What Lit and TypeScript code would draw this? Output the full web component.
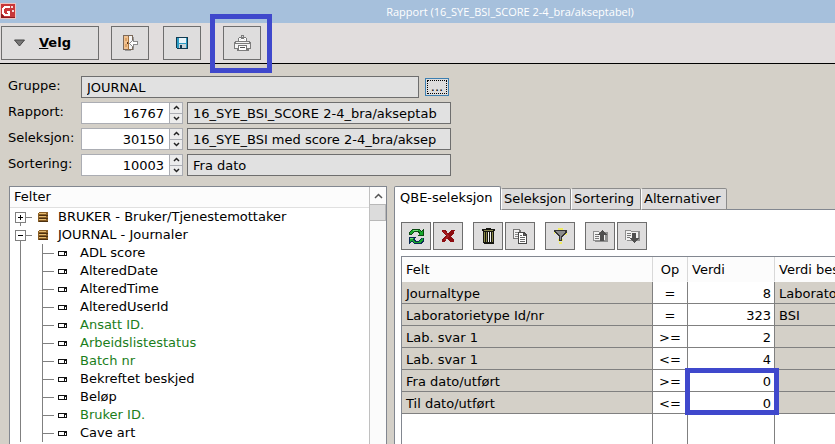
import { LitElement, html, svg, css, nothing } from "lit";
import { customElement, property } from "lit/decorators.js";
import { classMap } from "lit/directives/class-map.js";

const icons: Record<string, unknown> = {
  brand: svg`<rect width="16" height="16" fill="#eec4c0"/><rect x="1" y="1" width="14" height="14" fill="#c8383a"/><path d="M1 15V11L5 14H15V15Z" fill="#8e1c20"/><path d="M10 4H5L3 6v4l2 2h4V8.500H6.500" fill="none" stroke="#fff" stroke-width="2"/><path d="M11 3h2v2h-2zM12 7h2v2h-2z" fill="#f6d8d6"/>`,
  door: svg`<path d="M3 2h9v13h-3v1H3z" fill="#9a9a9a"/><path d="M1 0h10v15H1z" fill="#7c6a5a"/><path d="M2 1h4v13H2z" fill="#f2c290"/><path d="M6 2h1v13H6z" fill="#a8743c"/><path d="M7 1h3v13H7z" fill="#f4f4f4"/><path d="M3 3h2v3H3zM3 9h2v3H3z" fill="#dca468"/><path d="M5 7h1v2H5z" fill="#5a3418"/><path d="M7 8l4-4h1v2h4v4h-4v3h-1z" fill="#8a8a8a"/><path d="M8 8l3-3v2h4v2h-4v3z" fill="#fff"/>`,
  save: svg`<path d="M2 2h12v12H3l-1-1z" fill="#123a50"/><path d="M3 3h2v10H3zM12 3h1v10h-1zM5 8h7v1H5z" fill="#2b9cc4"/><path d="M5 3h7v5H5z" fill="#e8f4fa"/><path d="M5 9h7v4H5z" fill="#c8d4da"/><path d="M6 10h2v3H6z" fill="#123a50"/>`,
  print: svg`<path d="M4 7V3h1V2h2V0h3v2h2v1h1v4z" fill="#7c7c7c"/><path d="M5 6V3h2v1h3V3h2v3z" fill="#fff"/><path d="M8 1h1v1H8zM6 4h1v1H6zM10 4h1v1h-1z" fill="#ddd"/><path d="M1 6h15v1h1v7h-2v2H3v-2H0V7h1z" fill="#7c7c7c"/><path d="M2 7h13v1H2zM1 9h15v4H1z" fill="#f4f4f4"/><path d="M4 10h9v1H4zM4 11h1v4H4zM12 11h1v4h-1z" fill="#777"/><path d="M5 11h7v4H5z" fill="#fff"/><path d="M6 12h5v1H6z" fill="#555"/>`,
  refresh: svg`<path d="M1 7V4l3-3h7l2 2 3-2v7H9l2-2-2-2H6L4 7z" fill="#0b4b12"/><path d="M2 6V4l3-2h6l2 2 2-1v4h-4l1-2-2-2H6L4 6z" fill="#18a82c"/><path d="M16 10v3l-3 3H6l-2-2-3 2V9h7l-2 2 2 2h3l2-3z" fill="#0a2a54"/><path d="M15 10v2l-3 3H6l-2-2-2 1v-4h4l-1 2 2 2h4l2-3z" fill="#18a82c"/><path d="M5 2h5v1H5zM2 10h3v1H2z" fill="#70df74"/>`,
  cross: svg`<path d="M2 2h4l2 4 3-4h4l-1 3-3 3 3 4v2h-4l-3-4-2 4H2v-3l4-3-4-4z" fill="#8c0c10"/><path d="M3 3h2l4 5-4 4H4l3-4z" fill="#a81c20"/>`,
  trash: svg`<path d="M6 0h5v1h4v2h-1v12l-1 1H4l-1-1V3H2V1h4z" fill="#161610"/><path d="M4 4h1v10H4zM6 4h1v10H6zM12 4h1v10h-1z" fill="#8c8a48"/><path d="M8 4h1v10H8zM10 4h1v10h-1z" fill="#f4f4f4"/><path d="M4 2h9v1H4z" fill="#85844c"/>`,
  copy: svg`<path d="M1 1h6l2 2v8H1z" fill="#777"/><path d="M2 2h5v2h1v6H2z" fill="#f4f4f4"/><path d="M3 4h4v1H3zM3 6h4v1H3zM3 8h4v1H3z" fill="#888"/><path d="M6 4h6l3 3v9H6z" fill="#484848"/><path d="M7 5h4v3h3v7H7z" fill="#fff"/><path d="M12 6h1v1h-1zM8 7h2v1H8zM8 9h5v1H8zM8 11h5v1H8zM8 13h5v1H8z" fill="#666"/>`,
  filter: svg`<path d="M6 0h5v2H6zM6 11h5v2H6zM7 14h3v2H7zM2 3h1v3H2zM13 5h2v2h-2z" fill="#f0ec60"/><path d="M2 2h13v2l-5 5v4H7V9L2 4z" fill="#333"/><path d="M4 3h9v1l-4 4v4H8V8L4 4z" fill="#8c8c8c"/>`,
  load: svg`<path d="M1 3h5l1 1h9v10H3v-1H1z" fill="#8f8f8f"/><path d="M2 4h4l1 1h6v7H2z" fill="#f2f2f2"/><path d="M3 6h4v1H3zM3 8h4v1H3zM3 10h4v1H3z" fill="#777"/><path d="M10 2l5 5h-3v6H8V7H5z" fill="#505050"/>`,
  store: svg`<path d="M1 2h5l1 1h9v10H3v-1H1z" fill="#8f8f8f"/><path d="M2 3h4l1 1h7v8H2z" fill="#f2f2f2"/><path d="M3 5h4v1H3zM3 7h4v1H3zM3 9h3v1H3z" fill="#777"/><path d="M8 5h4v5h3l-5 5-5-5h3z" fill="#505050"/>`,
  table: svg`<path d="M4 3h8l1 1v9H3V4z" fill="#8a5e24"/><path d="M4 4h7v1H4zM4 7h7v1H4zM4 10h7v1H4z" fill="#e6bc72"/><path d="M4 6h9v1H4zM4 9h9v1H4zM4 12h9v1H4z" fill="#4c3010"/>`,
  field: svg`<path d="M3 6h9v5H3z" fill="#111"/><path d="M4 7h5v3H4zM10 8h1v2h-1z" fill="#fff"/>`,
};

@customElement("pixel-icon")
export class PixelIcon extends LitElement {
  @property() name = "";
  static styles = css`
    :host { display: block; width: 17px; height: 17px; flex: none; }
    svg { display: block; }
  `;
  render() {
    return html`<svg width="17" height="17" viewBox="0 0 17 17" shape-rendering="crispEdges" aria-hidden="true">${icons[this.name]}</svg>`;
  }
}

const parameters = [
  { id: "rapport", label: "Rapport:", nr: "16767", text: "16_SYE_BSI_SCORE 2-4_bra/akseptab" },
  { id: "seleksjon", label: "Seleksjon:", nr: "30150", text: "16_SYE_BSI med score 2-4_bra/aksep" },
  { id: "sortering", label: "Sortering:", nr: "10003", text: "Fra dato" },
];

const fields: { name: string; link?: boolean }[] = [
  { name: "ADL score" },
  { name: "AlteredDate" },
  { name: "AlteredTime" },
  { name: "AlteredUserId" },
  { name: "Ansatt ID.", link: true },
  { name: "Arbeidslistestatus", link: true },
  { name: "Batch nr", link: true },
  { name: "Bekreftet beskjed" },
  { name: "Beløp" },
  { name: "Bruker ID.", link: true },
  { name: "Cave art" },
];

const criteria = [
  ["Journaltype", "=", "8", "Laborato"],
  ["Laboratorietype Id/nr", "=", "323", "BSI"],
  ["Lab. svar 1", ">=", "2", ""],
  ["Lab. svar 1", "<=", "4", ""],
  ["Fra dato/utført", ">=", "0", ""],
  ["Til dato/utført", "<=", "0", ""],
];

const tools = [
  [["refresh", "Oppdater"], ["cross", "Avbryt"]],
  [["trash", "Slett"], ["copy", "Kopier"]],
  [["filter", "Filter"]],
  [["load", "Hent"], ["store", "Lagre"]],
];

@customElement("app-root")
export class AppRoot extends LitElement {
  static styles = css`
    * { box-sizing: border-box; }
    :host {
      display: flex;
      flex-direction: column;
      height: 100vh;
      overflow: hidden;
      background: #d4d0c8;
      color: #000;
      font: 13px/18px Verdana, "DejaVu Sans", sans-serif;
    }
    button, input { font: inherit; color: inherit; border-radius: 0; margin: 0; }
    button { display: flex; align-items: center; justify-content: center; padding: 0; background: #dedddd; border: 1px solid #6e6e6e; }
    ul { list-style: none; margin: 0; padding: 0; }

    .titlebar { display: flex; align-items: center; flex: none; height: 23px; background: #a6c0dc; }
    .title { flex: 1; margin: 0; padding-left: 168px; text-align: center; font: 11px/20px "Segoe UI", "Open Sans", sans-serif; color: #fff; white-space: nowrap; }

    .toolbar { display: flex; align-items: center; flex: none; gap: 12px; height: 41px; padding: 0 1px; background: #e1dddd; border-bottom: 1px solid #000; }
    .toolbar button { width: 38px; height: 34px; }
    .toolbar .choose { justify-content: flex-start; width: 98px; gap: 14px; padding-left: 12px; font-weight: bold; }
    .save { margin-left: 2px; }
    .print { position: relative; margin-left: 10px; }
    .mark { position: absolute; border: 5px solid #3f48cc; pointer-events: none; z-index: 1; }
    .print .mark { inset: -13px -12px -14px -14px; }

    .form { display: flex; flex-direction: column; flex: none; gap: 4px; padding: 12px 8px 10px; }
    .line { display: flex; height: 22px; }
    .line label { width: 73px; flex: none; line-height: 20px; white-space: nowrap; }
    .line input { height: 22px; padding: 0 5px; background: #e1e1e1; border: 1px solid #6e6e6e; outline: none; }
    .group { width: 338px; }
    .browse { width: 24px; height: 18px; margin: 2px 0 0 6px; border-color: #3c7fb1; outline: 1px dotted #000; outline-offset: -3px; }
    .spinner { display: flex; width: 102px; height: 22px; margin-right: 4px; border: 1px solid #abadb3; background: #fff; }
    .spinner input { flex: 1; min-width: 0; height: 20px; border: 0; background: #fff; text-align: right; }
    .arrows { display: flex; flex-direction: column; width: 13px; background: #f0f0f0; border-left: 1px solid #abadb3; }
    .arrows button { flex: 1; border: 0; background: #ececec; }
    .arrows button + button { border-top: 1px solid #abadb3; }
    .arrows svg { display: block; }
    .line .text { width: 264px; }

    .panes { display: flex; flex: 1; min-height: 0; gap: 7px; padding-left: 9px; }
    .tree { display: flex; width: 378px; flex: none; background: #fff; border: 1px solid #828790; border-bottom: 0; }
    .treebody { flex: 1; min-width: 0; overflow: hidden; }
    .treehead { height: 21px; margin: 0; padding: 1px 4px; font: inherit; background: #fcfcfc; border-bottom: 1px solid #e0e0e0; }
    .node { display: flex; align-items: center; height: 18px; padding-left: 5px; white-space: nowrap; }
    .expander { width: 11px; height: 11px; background: #fff; border-color: #808080; flex: none; position: relative; }
    .expander::after { content: ""; position: absolute; left: 10px; top: 4px; width: 6px; height: 1px; background: #808080; }
    .node pixel-icon { margin-left: 9px; margin-right: 6px; }
    .root > li { background: linear-gradient(#808080, #808080) 10px 9px / 1px 100% no-repeat; }
    .leaves { padding-left: 32px; border: 0; }
    .leaf { display: flex; align-items: center; height: 18px; border-left: 1px solid #808080; white-space: nowrap; }
    .leaf::before { content: ""; width: 11px; height: 1px; background: #808080; }
    .leaf pixel-icon { margin-left: 1px; margin-right: 8px; }
    .link { color: #1b7e1b; }
    .scroll { width: 17px; background: #fbfbfb; border-left: 1px solid #c0c0c0; flex: none; }
    .scroll button { width: 100%; height: 17px; background: #fcfcfc; border: 0; }
    .thumb { height: 17px; background: #dcdcdc; border: 1px solid #b8b8b8; border-left: 0; }

    .query { display: flex; flex-direction: column; flex: 1; min-width: 0; }
    .tabs { display: flex; align-items: flex-end; height: 24px; flex: none; background: linear-gradient(#828790, #828790) 0 100% / 100% 1px no-repeat; }
    .tabs button { justify-content: flex-start; height: 22px; padding-left: 2px; background: #dddcdc; border-color: #8c8c8c; border-left-color: #fff; border-radius: 2px 2px 0 0; white-space: nowrap; }
    .tabs .active { height: 24px; width: 107px; padding: 0 0 2px 5px; background: #fff; border-color: #828790; border-bottom: 0; }
    .t1 { width: 70px; }
    .t2 { width: 70px; }
    .t3 { width: 86px; }
    .sheet { display: flex; flex-direction: column; flex: 1; min-height: 0; padding: 12px 0 0 6px; background: #fff; border-left: 1px solid #828790; }
    .tools { display: flex; gap: 10px; flex: none; }
    .set { display: flex; gap: 2px; }
    .set button { width: 30px; height: 28px; }

    .grid { flex: 1; min-height: 0; margin-top: 6px; border: 1px solid #828790; border-width: 1px 0 0 1px; }
    table { width: 100%; height: 100%; table-layout: fixed; border-collapse: separate; border-spacing: 0; }
    th, td { height: 22px; padding: 2px 4px 0; border: 0 solid #808080; border-width: 0 1px 1px 0; font-weight: normal; text-align: left; line-height: 18px; white-space: nowrap; }
    th { height: 25px; background: #fcfcfc; border-color: #d8d8d8; border-bottom-color: #fcfcfc; }
    .c1 { width: 251px; }
    .c2 { width: 35px; }
    .c3 { width: 87px; }
    td { background: #d4d0c8; }
    th:last-child, td:last-child { border-right: 0; padding-right: 0; }
    .op { background: #fff; text-align: center; }
    th.op { background: #fcfcfc; }
    .value { position: relative; background: #fff; text-align: right; padding-right: 3px; }
    .value .mark { top: -2px; left: -3px; width: 94px; height: 47px; }
    .rest td { height: auto; background: #fff; border-bottom: 0; }
  `;

  private arrow(up: boolean) {
    return html`<svg width="7" height="5" viewBox="0 0 7 5" aria-hidden="true"><path d=${up ? "M1 4L3.500 1.500L6 4" : "M1 1L3.500 3.500L6 1"} fill="none" stroke="#222" stroke-width="1.500"/></svg>`;
  }

  private parameter(p: (typeof parameters)[number]) {
    return html`<div class="line">
      <label for=${p.id}>${p.label}</label>
      <div class="spinner">
        <input id=${p.id} .value=${p.nr} />
        <div class="arrows">
          <button aria-label="Opp">${this.arrow(true)}</button>
          <button aria-label="Ned">${this.arrow(false)}</button>
        </div>
      </div>
      <input class="text" readonly aria-label=${p.label} .value=${p.text} />
    </div>`;
  }

  private node(name: string, open: boolean) {
    return html`<div class="node">
      <button class="expander" aria-expanded=${open} aria-label=${name}>
        <svg width="9" height="9" viewBox="0 0 9 9" shape-rendering="crispEdges" aria-hidden="true"><path d=${open ? "M2 4h5v1H2z" : "M2 4h5v1H2zM4 2h1v5H4z"} /></svg>
      </button>
      <pixel-icon name="table"></pixel-icon>${name}
    </div>`;
  }

  render() {
    return html`
      <header class="titlebar">
        <pixel-icon name="brand"></pixel-icon>
        <h1 class="title">Rapport (16_SYE_BSI_SCORE 2-4_bra/akseptabel)</h1>
      </header>
      <nav class="toolbar">
        <button class="choose">
          <svg width="11" height="8" viewBox="0 0 11 8" aria-hidden="true"><path d="M0.500 1h10L5.500 7z" fill="#777" stroke="#444"/></svg>
          <span><u>V</u>elg</span>
        </button>
        <button aria-label="Avslutt"><pixel-icon name="door"></pixel-icon></button>
        <button class="save" aria-label="Lagre"><pixel-icon name="save"></pixel-icon></button>
        <button class="print" aria-label="Skriv ut"><pixel-icon name="print"></pixel-icon><span class="mark"></span></button>
      </nav>
      <section class="form">
        <div class="line">
          <label for="gruppe">Gruppe:</label>
          <input id="gruppe" class="group" readonly .value=${"JOURNAL"} />
          <button class="browse" aria-label="Velg gruppe">...</button>
        </div>
        ${parameters.map((p) => this.parameter(p))}
      </section>
      <main class="panes">
        <section class="tree">
          <div class="treebody">
            <h2 class="treehead">Felter</h2>
            <ul class="root">
              <li>${this.node("BRUKER - Bruker/Tjenestemottaker", false)}</li>
              <li>
                ${this.node("JOURNAL - Journaler", true)}
                <ul class="leaves">
                  ${fields.map((f) => html`<li class="leaf"><pixel-icon name="field"></pixel-icon><span class=${classMap({ link: !!f.link })}>${f.name}</span></li>`)}
                </ul>
              </li>
            </ul>
          </div>
          <div class="scroll">
            <button aria-label="Rull opp"><svg width="9" height="6" viewBox="0 0 9 6" aria-hidden="true"><path d="M1 5L4.500 1.500L8 5" fill="none" stroke="#555" stroke-width="1.500"/></svg></button>
            <div class="thumb"></div>
          </div>
        </section>
        <section class="query">
          <div class="tabs" role="tablist">
            <button class="active" role="tab" aria-selected="true">QBE-seleksjon</button>
            <button class="t1" role="tab">Seleksjon</button>
            <button class="t2" role="tab">Sortering</button>
            <button class="t3" role="tab">Alternativer</button>
          </div>
          <div class="sheet">
            <div class="tools">
              ${tools.map((set) => html`<div class="set">${set.map(([icon, label]) => html`<button aria-label=${label}><pixel-icon name=${icon}></pixel-icon></button>`)}</div>`)}
            </div>
            <div class="grid">
              <table>
                <thead>
                  <tr><th class="c1">Felt</th><th class="c2 op">Op</th><th class="c3">Verdi</th><th>Verdi bes</th></tr>
                </thead>
                <tbody>
                  ${criteria.map(([field, op, value, text], i) => html`<tr>
                    <td>${field}</td>
                    <td class="op">${op}</td>
                    <td class="value">${value}${i === 4 ? html`<span class="mark"></span>` : nothing}</td>
                    <td>${text}</td>
                  </tr>`)}
                  <tr class="rest"><td></td><td></td><td></td><td></td></tr>
                </tbody>
              </table>
            </div>
          </div>
        </section>
      </main>
    `;
  }
}
